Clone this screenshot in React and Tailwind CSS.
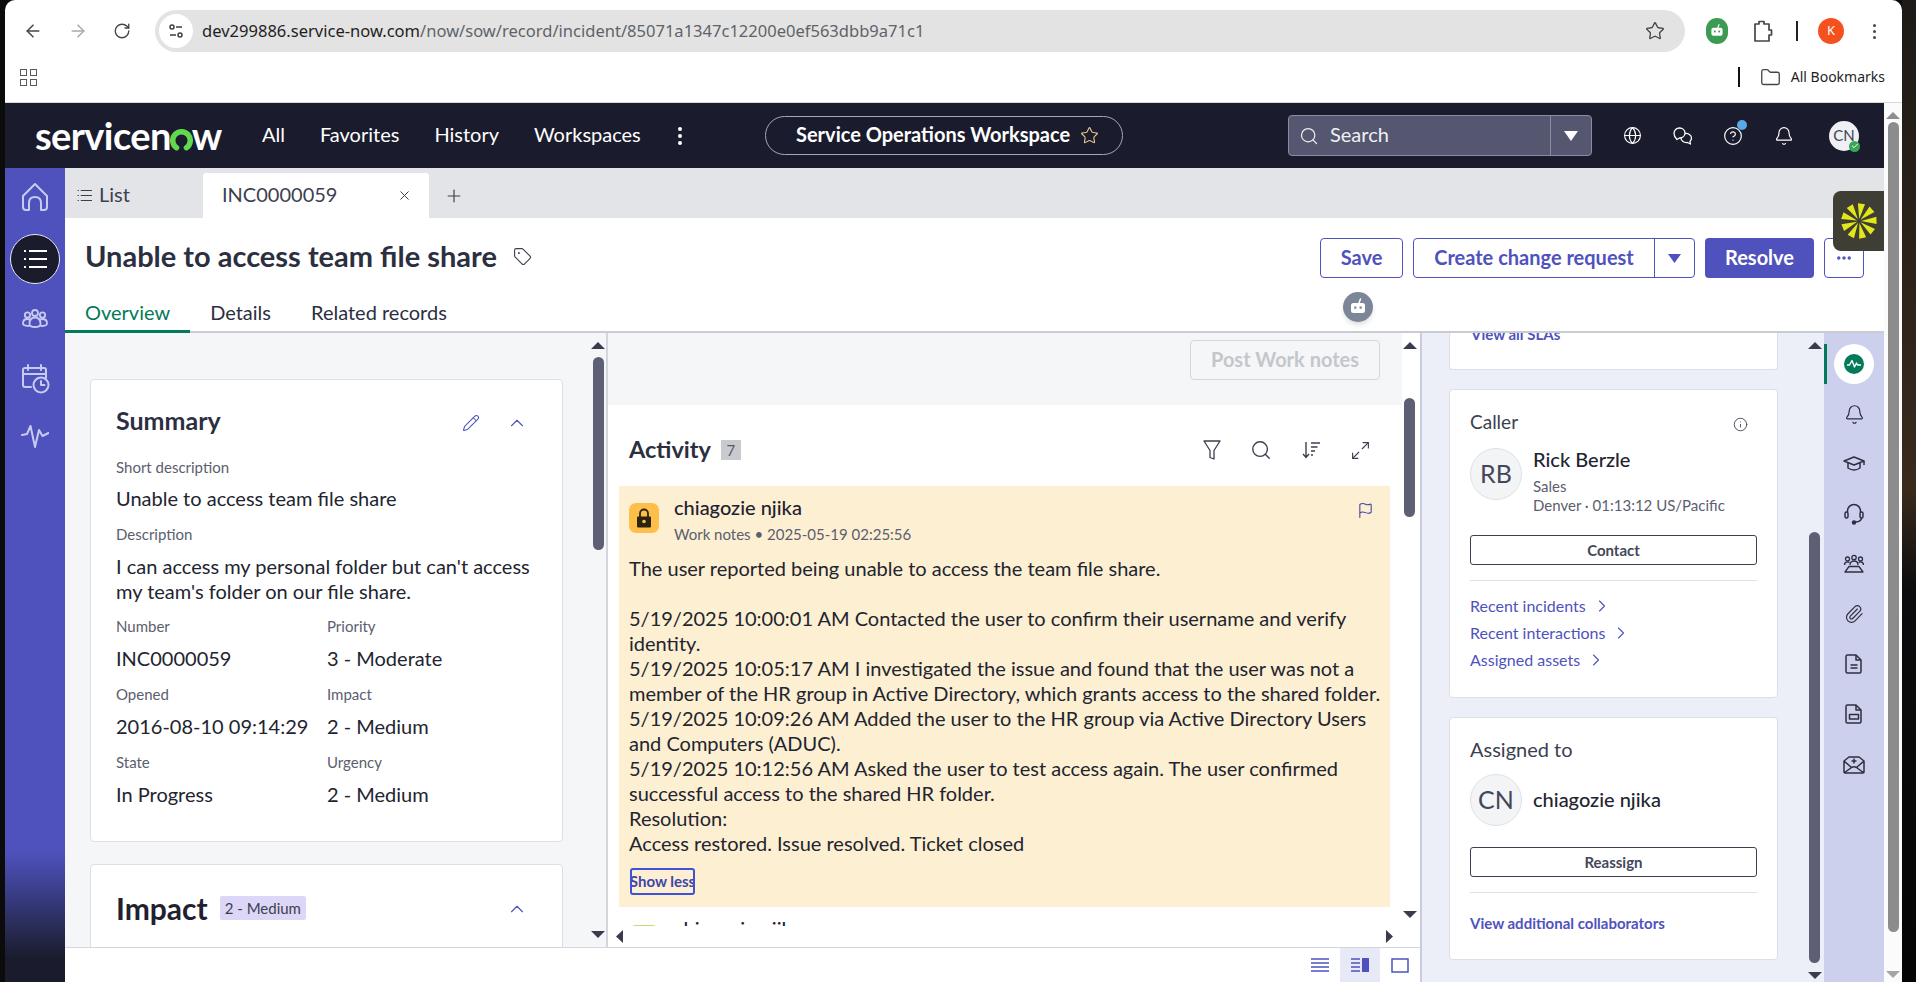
import React from "react";
import { ArrowLeft, ArrowRight, RotateCw, Star, Folder, Search, Globe, CircleHelp, Bell, X, Plus, Tag, Pencil, ChevronUp, ChevronRight, Maximize2, Flag, Info, Paperclip, MoreHorizontal, Check } from "lucide-react";

const Tri = ({ dir = "up", color = "#3a3c4e", w = 14, h = 7 }) => {
  const pts = { up: "0,10 14,10 7,0", down: "0,0 14,0 7,10", left: "10,0 10,14 0,7", right: "0,0 0,14 10,7" }[dir];
  const box = dir === "up" || dir === "down" ? "0 0 14 10" : "0 0 10 14";
  return <svg width={w} height={h} viewBox={box} className="shrink-0" preserveAspectRatio="none"><polygon points={pts} fill={color} /></svg>;
};

const Robot = ({ size = 20, face = "#fff", eye = "#7b8698" }) => (
  <svg width={size} height={size} viewBox="0 0 20 20">
    <path d="M11 6 L12.5 2" stroke={face} strokeWidth="1.5" strokeLinecap="round" />
    <rect x="3" y="6" width="14" height="10" rx="2.5" fill={face} />
    <rect x="6.2" y="9.5" width="2.2" height="2.2" fill={eye} />
    <rect x="11.6" y="9.5" width="2.2" height="2.2" fill={eye} />
  </svg>
);

const Spark = () => (
  <svg width="36" height="36" viewBox="0 0 36 36">
    {[8, 48, 88, 128, 168, 208, 248, 288, 328].map((a) => (
      <path key={a} d="M18 16 L14.4 0.5 L21.6 0.5 Z" fill="#e3e619" transform={`rotate(${a} 18 18)`} />
    ))}
  </svg>
);

const Group = ({ size = 28, color = "#c8cbf0", sw = 1.8 }) => (
  <svg width={size} height={size} viewBox="0 0 28 28" fill="none" stroke={color} strokeWidth={sw} strokeLinejoin="round">
    <circle cx="6.5" cy="10" r="2.7" /><circle cx="14" cy="8" r="3" /><circle cx="21.5" cy="10" r="2.7" />
    <path d="M8.5 21c-1.500 0-6.500 0-6.500-2.500 0-3 2-4.500 4.500-4.500 1 0 2 .4 2.500 1" />
    <path d="M19.500 21c1.500 0 6.500 0 6.500-2.500 0-3-2-4.500-4.500-4.500-1 0-2 .4-2.500 1" />
    <path d="M8.500 19c0-4 2-6.500 5.500-6.500s5.500 2.500 5.500 6.500c0 2-2.500 3-5.500 3s-5.500-1-5.500-3z" />
  </svg>
);

const Conference = () => (
  <svg width="22" height="22" viewBox="0 0 22 22" fill="none" stroke="#2c2f3f" strokeWidth="1.3" strokeLinejoin="round">
    <circle cx="4.500" cy="6" r="2" /><circle cx="11" cy="4.500" r="2.200" /><circle cx="17.500" cy="6" r="2" />
    <path d="M1.500 12c0-2 1.300-3.200 3-3.200 1 0 1.600.3 2 .8M20.500 12c0-2-1.300-3.200-3-3.200-1 0-1.600.3-2 .8" />
    <path d="M7 12c0-2.500 1.700-4 4-4s4 1.500 4 4" />
    <path d="M6 13.500h10l4 5.500H2z" />
  </svg>
);

const Pulse = ({ color = "#c8cbf0" }) => (
  <svg width="28" height="26" viewBox="0 0 28 26" fill="none" stroke={color} strokeWidth="2" strokeLinejoin="round" strokeLinecap="round">
    <path d="M1 11l5-1 3.500-8 4.500 21 4-17 3.500 6 6-3" />
  </svg>
);

const HomeIcon = () => (
  <svg width="28" height="30" viewBox="0 0 28 30" fill="none" stroke="#c8cbf0" strokeWidth="2" strokeLinejoin="round">
    <path d="M2 14 L14 2 L26 14 V25 Q26 28 23 28 H20 V21 Q20 15 14 15 Q8 15 8 21 V28 H5 Q2 28 2 25 Z" />
  </svg>
);

const ListIcon = ({ size = 24, color = "#fff", sw = 2.200 }) => (
  <svg width={size} height={size} viewBox="0 0 24 24" fill="none" stroke={color} strokeWidth={sw}>
    <path d="M1 4h2M1 12h2M1 20h2M6 4h18M6 12h18M6 20h18" />
  </svg>
);

const CalIcon = () => (
  <svg width="30" height="30" viewBox="0 0 30 30" fill="none" stroke="#c8cbf0" strokeWidth="2" strokeLinejoin="round" strokeLinecap="round">
    <path d="M11 23H5q-2 0-2-2V6q0-2 2-2h19q2 0 2 2v8M3 10h23M8 1v5M21 1v5" />
    <circle cx="21" cy="21" r="7.500" /><path d="M21 17v4h3.500" />
  </svg>
);

const Bubbles = () => (
  <svg width="20" height="20" viewBox="0 0 20 20" fill="none" stroke="#fff" strokeWidth="1.300" strokeLinejoin="round">
    <path d="M4 13.500 C1.500 11 1 9 1 7.500 C1 4 3.500 2 6.500 2 C9.500 2 12 4 12 7 C12 10 9.500 12 6.500 12 L4 13.500Z" />
    <path d="M12 7.500 C15 7 18.500 9 18.500 12 C18.500 13.500 18 14.500 17 15.300 L17.500 18 L14.500 16.500 C11 17 8 15 8 12" />
  </svg>
);

const DocEq = ({ filled }) => (
  <svg width="18" height="20" viewBox="0 0 18 20" fill="none" stroke="#2c2f3f" strokeWidth="1.500" strokeLinejoin="round">
    <path d="M2.500 1H11l5 5v11.500q0 1.500-1.500 1.500h-12q-1.500 0-1.500-1.500V2.500Q1 1 2.500 1z" />
    <path d="M11 1v5h5" />
    {filled ? <rect x="4.500" y="10.500" width="9" height="4.500" /> : <path d="M5.500 11h7M5.500 14h7" />}
  </svg>
);

const MailPlus = () => (
  <svg width="22" height="20" viewBox="0 0 22 20" fill="none" stroke="#2c2f3f" strokeWidth="1.500" strokeLinejoin="round">
    <path d="M1 7 6 3h10l5 4v11q0 1-1 1H2q-1 0-1-1zM1 7l7.500 6.500M21 7l-7.500 6.500M1 19l7.500-5.500q2.500-1.500 5 0L21 19M11 4.500v5M8.500 7h5" />
  </svg>
);

const Cap = () => (
  <svg width="22" height="18" viewBox="0 0 22 18" fill="none" stroke="#2c2f3f" strokeWidth="1.500" strokeLinejoin="round">
    <path d="M1 6 11 2l10 4-10 4z" /><path d="M5 8v5q6 4 12 0V8M21 6v4" />
  </svg>
);

const Headset = () => (
  <svg width="20" height="22" viewBox="0 0 20 22" fill="none" stroke="#2c2f3f" strokeWidth="1.500" strokeLinejoin="round">
    <path d="M3.500 9V8a6.500 6.500 0 0 1 13 0v1" /><rect x="1" y="9" width="3" height="6" rx="1.500" /><rect x="16" y="9" width="3" height="6" rx="1.500" />
    <path d="M17.500 15q0 3.500-6 4" /><circle cx="10" cy="19.500" r="1.500" fill="#2c2f3f" />
  </svg>
);

const FunnelIcon = () => (
  <svg width="18" height="22" viewBox="0 0 18 22" fill="none" stroke="#3c3f4f" strokeWidth="1.300" strokeLinejoin="round"><path d="M1 2h16l-6 9.500V20l-4-1.500v-7z" /></svg>
);
const SortIcon = () => (
  <svg width="20" height="20" viewBox="0 0 20 20" fill="none" stroke="#3c3f4f" strokeWidth="1.400"><path d="M5 2v15M2 14l3 3.500L8 14M10 3h9M10 7h6.500M10 11h4M10 15h2" /></svg>
);
const LockSolid = () => (
  <svg width="16" height="20" viewBox="0 0 16 20" fill="none"><path d="M4 9V5.500a4 4 0 0 1 8 0V9" stroke="#2d2410" strokeWidth="1.800" /><rect x="1" y="8.500" width="14" height="11" rx="1" fill="#2d2410" /><circle cx="8" cy="13.500" r="1.800" fill="#fdbf4a" /></svg>
);

const Field = ({ label, value }) => (
  <div className="h-[68px]">
    <div className="text-[15px] leading-[18px] text-[#5b5e6e] pt-[6px] h-[24px]">{label}</div>
    <div className="text-[20px] leading-[24px] text-[#22242f] mt-[11px] whitespace-nowrap">{value}</div>
  </div>
);

const NoteLine = ({ children }) => <div className="whitespace-nowrap h-[25px]">{children}</div>;

const Chev = ({ children }) => (
  <div className="flex items-center h-[27px] text-[16px] text-[#4f52bd]">
    {children}
    <ChevronRight size={20} strokeWidth={1.3} className="ml-[6px]" />
  </div>
);

const RailIcon = ({ children }) => <div className="h-[50px] w-full flex items-center justify-center">{children}</div>;

export default function App() {
  return (
    <div className="w-[1916px] h-[982px] overflow-hidden flex bg-[#0a0a0c] text-[#22242f]" style={{ fontFamily: "Lato, 'Noto Sans', sans-serif" }}>
      <div className="w-[5px] shrink-0 bg-[#0b0b0b]" />
      <div className="w-[1897px] shrink-0 flex flex-col">
        {/* Chrome */}
        <div className="h-[103px] shrink-0 bg-white rounded-tl-[10px] rounded-tr-[10px] border-b border-[#d8d8d8] flex flex-col" style={{ fontFamily: "'Noto Sans', sans-serif" }}>
          <div className="h-[52px] flex items-end shrink-0">
            <div className="w-[150px] h-[42px] flex items-center pl-[18px] gap-[25px] text-[#444746] shrink-0">
              <ArrowLeft size={20} strokeWidth={1.8} />
              <ArrowRight size={20} strokeWidth={1.8} className="text-[#a9aaab]" />
              <RotateCw size={18} strokeWidth={1.8} />
            </div>
            <div className="w-[1530px] h-[42px] rounded-full bg-[#e3e3e3] flex items-center shrink-0">
              <div className="w-[34px] h-[34px] ml-[4px] rounded-full bg-white flex items-center justify-center">
                <svg width="18" height="18" viewBox="0 0 18 18" fill="none" stroke="#3c3f43" strokeWidth="1.5">
                  <circle cx="5" cy="5" r="2" /><path d="M9 5h6M3 13h6" /><circle cx="13" cy="13" r="2" />
                </svg>
              </div>
              <div className="ml-[9px] text-[16.55px] text-[#1f1f1f] whitespace-nowrap">dev299886.service-now.com<span className="text-[#5f6368]">/now/sow/record/incident/85071a1347c12200e0ef563dbb9a71c1</span></div>
              <div className="ml-auto mr-[20px] text-[#444746]"><Star size={20} strokeWidth={1.6} /></div>
            </div>
            <div className="flex-1 h-[42px] flex items-center relative text-[#444746]">
              <div className="ml-[21px] w-[22px] h-[26px] rounded-full bg-[#3d9a53] flex items-center justify-center"><Robot size={16} face="#fff" eye="#3d9a53" /></div>
              <svg width="20" height="24" viewBox="0 0 20 24" fill="none" stroke="#444746" strokeWidth="1.700" strokeLinejoin="round" className="ml-[25px]">
                <path d="M2 5h4V2.500h5V5h5v6h2.500v5H16v6H2z" />
              </svg>
              <div className="ml-[23px] w-[2px] h-[20px] bg-[#222]" />
              <div className="ml-[20px] w-[26px] h-[26px] rounded-full bg-[#f4511e] text-white text-[13px] flex items-center justify-center">K</div>
              <div className="ml-[29px] flex flex-col gap-[3px]">
                <span className="w-[3px] h-[3px] rounded-full bg-[#444746]" /><span className="w-[3px] h-[3px] rounded-full bg-[#444746]" /><span className="w-[3px] h-[3px] rounded-full bg-[#444746]" />
              </div>
            </div>
          </div>
          <div className="flex-1 flex items-center">
            <div className="ml-[15px] grid grid-cols-2 gap-[3px]">
              <span className="w-[7px] h-[7px] border border-[#55585c]" /><span className="w-[7px] h-[7px] border border-[#55585c]" /><span className="w-[7px] h-[7px] border border-[#55585c]" /><span className="w-[7px] h-[7px] border border-[#55585c]" />
            </div>
            <div className="ml-auto flex items-center">
              <div className="w-[2px] h-[20px] bg-[#111]" />
              <Folder size={21} strokeWidth={1.5} className="ml-[20px] text-[#444746]" />
              <span className="ml-[10px] mr-[17px] pb-[2px] text-[14px] text-[#1f1f1f] whitespace-nowrap">All Bookmarks</span>
            </div>
          </div>
        </div>

        <div className="flex-1 flex min-h-0">
          {/* Page */}
          <div className="w-[1879px] shrink-0 flex flex-col relative">
            {/* Nav */}
            <div className="h-[65px] shrink-0 bg-[#1a1c2e] flex items-center text-white relative">
              <div className="ml-[30px] w-[197px] h-[40px] flex items-center text-[38px] font-bold tracking-[-0.6px] whitespace-nowrap">
                servicen
                <svg width="23" height="23" viewBox="0 0 21 21" className="mt-[7px] mx-[-1px] shrink-0">
                  <path d="M6 18 A8 8 0 1 1 15 18" fill="none" stroke="#62d84e" strokeWidth="5" strokeLinecap="round" />
                </svg>
                w
              </div>
              <div className="ml-[30px] w-[416px] flex items-center gap-[35px] pb-[3px] text-[20px] whitespace-nowrap">
                <span>All</span><span>Favorites</span><span>History</span><span>Workspaces</span>
              </div>
              <div className="flex flex-col gap-[3px]">
                <span className="w-[4px] h-[4px] rounded-full bg-white" /><span className="w-[4px] h-[4px] rounded-full bg-white" /><span className="w-[4px] h-[4px] rounded-full bg-white" />
              </div>
              <div className="ml-[83px] w-[358px] h-[39px] border border-[#a5a7b3] rounded-full flex items-center pl-[30px] pb-[3px] text-[20px] font-bold whitespace-nowrap">
                Service Operations Workspace
                <Star size={19} strokeWidth={1.4} className="ml-[10px] mt-[3px] text-[#e8c98a]" />
              </div>
              <div className="ml-[165px] w-[304px] h-[41px] rounded-[4px] border border-[#8a8ca0] bg-[#55566f] flex items-center">
                <Search size={20} strokeWidth={1.5} className="ml-[10px] text-[#eee]" />
                <span className="ml-[11px] pb-[3px] text-[20px] text-[#f0f0f4]">Search</span>
                <div className="ml-auto w-[41px] h-full border-l border-[#8a8ca0] flex items-center justify-center"><Tri dir="down" color="#fff" w={14} h={10} /></div>
              </div>
              <Globe size={19} strokeWidth={1.4} className="ml-[31px]" />
              <div className="ml-[31px]"><Bubbles /></div>
              <div className="ml-[30px] relative">
                <CircleHelp size={20} strokeWidth={1.4} />
                <span className="absolute -top-[6px] -right-[4px] w-[10px] h-[10px] rounded-full bg-[#5aa9e6]" />
              </div>
              <Bell size={20} strokeWidth={1.4} className="ml-[31px]" />
              <div className="ml-[35px] w-[30px] h-[30px] rounded-full bg-[#eef0f3] text-[#3f4252] text-[15px] flex items-center justify-center relative">
                CN
                <span className="absolute -bottom-[1px] -right-[1px] w-[11px] h-[11px] rounded-full bg-[#3aa655] flex items-center justify-center"><Check size={8} strokeWidth={3} className="text-white" /></span>
              </div>
            </div>

            <div className="flex-1 flex min-h-0">
              {/* Left rail */}
              <div className="w-[60px] shrink-0 flex flex-col items-center text-white" style={{ background: "linear-gradient(180deg,#4f52bd 0,#4f52bd 84%,#1a1c2e 97%,#1a1c2e 100%)" }}>
                <div className="mt-[14px]"><HomeIcon /></div>
                <div className="mt-[22px] w-[50px] h-[50px] rounded-full bg-[#1a1c2e] border border-[#e8e8f5] flex items-center justify-center"><ListIcon /></div>
                <div className="mt-[21px]"><Group /></div>
                <div className="mt-[31px]"><CalIcon /></div>
                <div className="mt-[30px]"><Pulse /></div>
              </div>

              <div className="w-[1819px] shrink-0 flex flex-col relative">
                {/* Tabs */}
                <div className="h-[50px] shrink-0 bg-[#e2e4e8] flex items-end text-[20px]">
                  <div className="w-[138px] h-[45px] flex items-center pl-[12px] text-[#3c3f4f]"><ListIcon size={15} color="#3c3f4f" sw={1.8} /><span className="ml-[7px] pb-[3px]">List</span></div>
                  <div className="w-[226px] h-[45px] bg-white rounded-t-[3px] flex items-center pl-[19px] text-[#3c3f4f] whitespace-nowrap"><span className="pb-[3px]">INC0000059</span><X size={15} strokeWidth={1.6} className="ml-[60px] shrink-0" /></div>
                  <div className="h-[45px] flex items-center ml-[15px] text-[#3c3f4f]"><Plus size={20} strokeWidth={1.4} /></div>
                </div>

                {/* Title */}
                <div className="h-[80px] shrink-0 bg-white flex items-center justify-between pl-[20px] pr-[20px]">
                  <div className="flex items-center -mt-[4px]">
                    <h1 className="text-[29px] font-bold text-[#2c2f3f] whitespace-nowrap">Unable to access team file share</h1>
                    <Tag size={19} strokeWidth={1.4} className="ml-[16px] text-[#3c3f4f]" />
                  </div>
                  <div className="flex items-center text-[20px] font-bold text-[#4f52bd]">
                    <div className="w-[83px] h-[40px] border border-[#4f52bd] rounded-[4px] flex items-center justify-center pb-[2px]">Save</div>
                    <div className="ml-[10px] w-[282px] h-[40px] border border-[#4f52bd] rounded-[4px] flex items-center">
                      <span className="w-[240px] text-center whitespace-nowrap pb-[2px]">Create change request</span>
                      <div className="flex-1 h-full border-l border-[#4f52bd] flex items-center justify-center"><Tri dir="down" color="#4f52bd" w={13} h={9} /></div>
                    </div>
                    <div className="ml-[10px] w-[109px] h-[40px] rounded-[4px] bg-[#4f52bd] text-white flex items-center justify-center pb-[2px]">Resolve</div>
                    <div className="ml-[10px] w-[40px] h-[40px] border border-[#4f52bd] rounded-[4px] flex items-center justify-center"><MoreHorizontal size={18} strokeWidth={2.6} /></div>
                  </div>
                </div>

                {/* Sub tabs */}
                <div className="h-[35px] shrink-0 bg-white border-b-2 border-[#c9ccd3] flex text-[20px] text-[#2c2f3f] relative">
                  <div className="px-5 h-[35px] text-[#047a5a] border-b-[3px] border-[#047a5a] leading-[28px]">Overview</div>
                  <div className="px-5 leading-[28px]">Details</div>
                  <div className="px-5 leading-[28px] whitespace-nowrap">Related records</div>
                </div>

                <div className="flex-1 flex min-h-0">
                  <div className="w-[1355px] shrink-0 flex flex-col">
                    {/* Panes */}
                    <div className="h-[614px] shrink-0 flex min-h-0">
                      {/* Left pane */}
                      <div className="w-[541px] shrink-0 bg-[#f5f6f8] flex">
                        <div className="w-[525px] shrink-0 pl-[25px] overflow-hidden">
                          <div className="mt-[46px] w-[473px] h-[463px] bg-white border border-[#dcdfe5] rounded-[4px] pl-[25px] pr-[20px] pt-[24px]">
                            <div className="flex items-center h-[34px]">
                              <span className="text-[25px] font-bold text-[#2c2f3f]">Summary</span>
                              <Pencil size={18} strokeWidth={1.4} className="ml-auto text-[#4f52bd] mr-[26px] mt-[4px]" />
                              <ChevronUp size={22} strokeWidth={1.2} className="text-[#4f52bd] mr-[14px] mt-[4px]" />
                            </div>
                            <div className="text-[15px] leading-[18px] text-[#5b5e6e] mt-[20px]">Short description</div>
                            <div className="text-[20px] leading-[24px] mt-[10px]">Unable to access team file share</div>
                            <div className="text-[15px] leading-[18px] text-[#5b5e6e] mt-[15px]">Description</div>
                            <div className="text-[20px] leading-[25px] mt-[11px] whitespace-nowrap">I can access my personal folder but can't access<br />my team's folder on our file share.</div>
                            <div className="grid grid-cols-[211px_1fr] mt-[7px]">
                              <Field label="Number" value="INC0000059" />
                              <Field label="Priority" value="3 - Moderate" />
                              <Field label="Opened" value="2016-08-10 09:14:29" />
                              <Field label="Impact" value="2 - Medium" />
                              <Field label="State" value="In Progress" />
                              <Field label="Urgency" value="2 - Medium" />
                            </div>
                          </div>
                          <div className="mt-[22px] w-[473px] h-[120px] bg-white border border-[#dcdfe5] rounded-[4px] pl-[25px] pr-[20px] pt-[23px] flex items-start">
                            <span className="text-[30px] leading-[40px] font-bold text-[#1f2130]">Impact</span>
                            <span className="ml-[12px] mt-[8px] h-[24px] px-[5px] bg-[#dcd6f7] rounded-[2px] text-[15px] leading-[24px] text-[#3c3f4f] whitespace-nowrap">2 - Medium</span>
                            <ChevronUp size={22} strokeWidth={1.2} className="ml-auto mt-[10px] text-[#4f52bd] mr-[14px]" />
                          </div>
                        </div>
                        <div className="w-[16px] shrink-0 flex flex-col items-center">
                          <div className="mt-[9px]"><Tri dir="up" /></div>
                          <div className="mt-[8px] w-[11px] h-[193px] rounded-full bg-[#5d5f75]" />
                          <div className="mt-auto mb-[9px]"><Tri dir="down" /></div>
                        </div>
                      </div>
                      <div className="w-[2px] shrink-0 bg-[#d3d6dc]" />

                      {/* Center pane */}
                      <div className="w-[812px] shrink-0 bg-white flex">
                        <div className="w-[794px] shrink-0 flex flex-col">
                          <div className="h-[72px] shrink-0 bg-[#f5f6f8] flex justify-end pt-[7px] pr-[22px]">
                            <div className="w-[190px] h-[40px] border border-[#d5d7dc] rounded-[4px] flex items-center justify-center pb-[2px] text-[20px] font-bold text-[#c4c6cc] whitespace-nowrap">Post Work notes</div>
                          </div>
                          <div className="h-[81px] shrink-0 flex items-center pl-[21px] pr-[31px] pt-[9px] bg-white rounded-t-[8px]">
                            <span className="text-[23.5px] font-bold text-[#2c2f3f]">Activity</span>
                            <span className="ml-[10px] w-[20px] h-[20px] bg-[#c9cacd] text-[#55586a] text-[15px] leading-[20px] text-center">7</span>
                            <div className="ml-auto flex items-center gap-[29px] text-[#3c3f4f]">
                              <FunnelIcon />
                              <Search size={22} strokeWidth={1.5} />
                              <SortIcon />
                              <Maximize2 size={21} strokeWidth={1.3} />
                            </div>
                          </div>
                          <div className="ml-[11px] w-[771px] h-[421px] shrink-0 bg-[#fdefd2] pl-[10px] pt-[17px] relative">
                            <div className="flex">
                              <div className="w-[30px] h-[30px] rounded-[7px] bg-[#fdbf4a] flex items-center justify-center"><LockSolid /></div>
                              <div className="ml-[15px] -mt-[9px]">
                                <div className="text-[20px] leading-[26px] font-medium text-[#1f2130]">chiagozie njika</div>
                                <div className="text-[15px] leading-[20px] mt-[4px] text-[#5b5e6e] whitespace-nowrap">Work notes • 2025-05-19 02:25:56</div>
                              </div>
                              <Flag size={17} strokeWidth={1.5} className="ml-auto mr-[16px] -mt-[1px] text-[#3f42a8]" />
                            </div>
                            <div className="mt-[12px] text-[20px] leading-[25px] text-[#22242f]">
                              <NoteLine>The user reported being unable to access the team file share.</NoteLine>
                              <NoteLine>&nbsp;</NoteLine>
                              <NoteLine>5/19/2025 10:00:01 AM Contacted the user to confirm their username and verify</NoteLine>
                              <NoteLine>identity.</NoteLine>
                              <NoteLine>5/19/2025 10:05:17 AM I investigated the issue and found that the user was not a</NoteLine>
                              <NoteLine>member of the HR group in Active Directory, which grants access to the shared folder.</NoteLine>
                              <NoteLine>5/19/2025 10:09:26 AM Added the user to the HR group via Active Directory Users</NoteLine>
                              <NoteLine>and Computers (ADUC).</NoteLine>
                              <NoteLine>5/19/2025 10:12:56 AM Asked the user to test access again. The user confirmed</NoteLine>
                              <NoteLine>successful access to the shared HR folder.</NoteLine>
                              <NoteLine>Resolution:</NoteLine>
                              <NoteLine>Access restored. Issue resolved. Ticket closed</NoteLine>
                            </div>
                            <div className="mt-[12px] ml-[1px] w-[65px] h-[27px] border-2 border-[#3f51d8] rounded-[3px] text-[15px] leading-[23px] font-bold text-[#3f45a8] whitespace-nowrap overflow-hidden flex justify-center">Show less</div>
                          </div>
                          <div className="h-[19px] shrink-0 flex overflow-hidden pl-[21px]">
                            <div className="w-[30px] h-[30px] mt-[18px] rounded-[7px] bg-[#c9d66b]" />
                            <div className="ml-[15px] mt-[8px] text-[20px] leading-[26px] font-medium text-[#1f2130]">chiagozie njika</div>
                          </div>
                          <div className="flex-1 flex items-center justify-between pl-[8px] pr-[9px]">
                            <Tri dir="left" w={7} h={13} />
                            <Tri dir="right" w={7} h={13} />
                          </div>
                        </div>
                        <div className="w-[15px] shrink-0 flex flex-col items-center">
                          <div className="mt-[9px]"><Tri dir="up" /></div>
                          <div className="mt-[49px] w-[11px] h-[119px] rounded-full bg-[#5d5f75]" />
                          <div className="mt-auto mb-[29px]"><Tri dir="down" /></div>
                        </div>
                      </div>
                    </div>

                    {/* Footer */}
                    <div className="flex-1 bg-white border-t border-[#d3d6dc] flex items-center justify-end">
                      <div className="w-[40px] h-full flex items-center justify-center">
                        <svg width="20" height="16" viewBox="0 0 20 16"><path d="M1 2h18M1 6h18M1 10h18M1 14h18" stroke="#4f52bd" strokeWidth="1.5" /></svg>
                      </div>
                      <div className="w-[40px] h-full bg-[#e8e9f6] flex items-center justify-center">
                        <svg width="20" height="16" viewBox="0 0 20 16"><path d="M1 2h9M1 6h9M1 10h9M1 14h9" stroke="#4f52bd" strokeWidth="1.5" /><rect x="12" y="1" width="7" height="14" fill="#4f52bd" /></svg>
                      </div>
                      <div className="w-[40px] h-full flex items-center justify-center"><svg width="18" height="15" viewBox="0 0 18 15" fill="none"><rect x="1" y="1" width="16" height="13" stroke="#4f52bd" strokeWidth="1.5" /></svg></div>
                    </div>
                  </div>

                  {/* Right pane */}
                  <div className="w-[404px] shrink-0 bg-[#eceef8] border-l-2 border-[#c9cce0] flex">
                    <div className="w-[383px] shrink-0 pl-[27px] overflow-hidden">
                      <div className="w-[329px] h-[37px] bg-white border border-t-0 border-[#dcdfe5] rounded-b-[4px] overflow-hidden">
                        <div className="-mt-[7px] pl-[21px] text-[15px] leading-[16px] font-bold text-[#4f52bd]">View all SLAs</div>
                      </div>
                      <div className="mt-[19px] w-[329px] h-[309px] bg-white border border-[#dcdfe5] rounded-[4px] px-[20px] relative">
                        <div className="mt-[20px] h-[24px] text-[19px] leading-[24px] text-[#3c3f4f] flex items-center">Caller<Info size={15} strokeWidth={1.4} className="ml-auto mr-[9px] mt-[4px] text-[#3c3f4f]" /></div>
                        <div className="flex mt-[14px] h-[87px]">
                          <div className="w-[52px] h-[52px] rounded-full bg-[#f3f4f6] border border-[#dfe1e6] text-[25px] text-[#44475a] flex items-center justify-center shrink-0">RB</div>
                          <div className="ml-[11px] -mt-[2px]">
                            <div className="text-[20px] leading-[26px] font-medium text-[#22242f]">Rick Berzle</div>
                            <div className="mt-[5px] text-[15px] leading-[19px] text-[#5b5e6e] whitespace-nowrap">Sales<br />Denver · 01:13:12 US/Pacific</div>
                          </div>
                        </div>
                        <div className="h-[30px] border border-[#3c3f4f] rounded-[3px] flex items-center justify-center text-[15px] font-bold text-[#44475a]">Contact</div>
                        <div className="mt-[15px] h-px bg-[#dfe1e6]" />
                        <div className="mt-[11px]">
                          <Chev>Recent incidents</Chev>
                          <Chev>Recent interactions</Chev>
                          <Chev>Assigned assets</Chev>
                        </div>
                      </div>
                      <div className="mt-[19px] w-[329px] h-[243px] bg-white border border-[#dcdfe5] rounded-[4px] px-[20px]">
                        <div className="mt-[18px] text-[20px] leading-[26px] text-[#3c3f4f]">Assigned to</div>
                        <div className="flex items-center mt-[12px]">
                          <div className="w-[52px] h-[52px] rounded-full bg-[#f3f4f6] border border-[#dfe1e6] text-[25px] text-[#44475a] flex items-center justify-center shrink-0">CN</div>
                          <div className="ml-[11px] pb-[2px] text-[20px] font-medium text-[#22242f] whitespace-nowrap">chiagozie njika</div>
                        </div>
                        <div className="mt-[21px] h-[30px] border border-[#3c3f4f] rounded-[3px] flex items-center justify-center text-[15px] font-bold text-[#44475a]">Reassign</div>
                        <div className="mt-[15px] h-px bg-[#dfe1e6]" />
                        <div className="mt-[20px] text-[15px] leading-[20px] font-bold text-[#4f52bd] whitespace-nowrap">View additional collaborators</div>
                      </div>
                    </div>
                    <div className="w-[19px] shrink-0 flex flex-col items-center">
                      <div className="mt-[9px]"><Tri dir="up" /></div>
                      <div className="mt-[183px] w-[11px] h-[431px] rounded-full bg-[#5d5f75]" />
                      <div className="mt-[9px]"><Tri dir="down" /></div>
                    </div>
                  </div>

                  {/* Right icon rail */}
                  <div className="w-[60px] shrink-0 bg-[#cdd0ec] flex flex-col items-center relative text-[#2c2f3f]">
                    <div className="w-full h-[40px] mt-[11px] flex items-center relative border-l-[3px] border-[#047a5a]">
                      <div className="ml-[7px] w-[40px] h-[40px] rounded-full bg-white flex items-center justify-center">
                        <div className="w-[20px] h-[20px] rounded-full bg-[#047a5a] flex items-center justify-center">
                          <svg width="14" height="14" viewBox="0 0 14 14" fill="none" stroke="#fff" strokeWidth="1.400" strokeLinejoin="round"><path d="M0 8h2.500L5 3.500 7.500 10 9.500 6l1 2H14" /></svg>
                        </div>
                      </div>
                    </div>
                    <div className="mt-[5px] w-full">
                      <RailIcon><Bell size={21} strokeWidth={1.4} /></RailIcon>
                      <RailIcon><Cap /></RailIcon>
                      <RailIcon><Headset /></RailIcon>
                      <RailIcon><Conference /></RailIcon>
                      <RailIcon><Paperclip size={20} strokeWidth={1.4} /></RailIcon>
                      <RailIcon><DocEq /></RailIcon>
                      <RailIcon><DocEq filled /></RailIcon>
                      <RailIcon><MailPlus /></RailIcon>
                    </div>
                  </div>
                </div>

                {/* Overlays */}
                <div className="absolute left-[1278px] top-[124px] w-[30px] h-[30px] rounded-full bg-[#7b8698] shadow-md flex items-center justify-center"><Robot size={20} /></div>
                <div className="absolute right-0 top-[23px] w-[51px] h-[60px] rounded-l-[8px] bg-[#3e3e35] flex items-center justify-center"><Spark /></div>
              </div>
            </div>
          </div>
          {/* Page scrollbar */}
          <div className="w-[18px] shrink-0 bg-[#fbfbfb] flex flex-col items-center">
            <div className="mt-[9px]"><Tri dir="up" color="#8d8d8d" /></div>
            <div className="mt-[3px] w-[11px] h-[810px] rounded-full bg-[#8c8c8c]" />
            <div className="mt-auto mb-[4px]"><Tri dir="down" color="#a5a5a5" /></div>
          </div>
        </div>
      </div>
      <div className="flex-1" style={{ background: "linear-gradient(180deg,#1d1a17 0,#3a2a1c 50%,#0c0c0e 60%,#050505 100%)" }} />
    </div>
  );
}
